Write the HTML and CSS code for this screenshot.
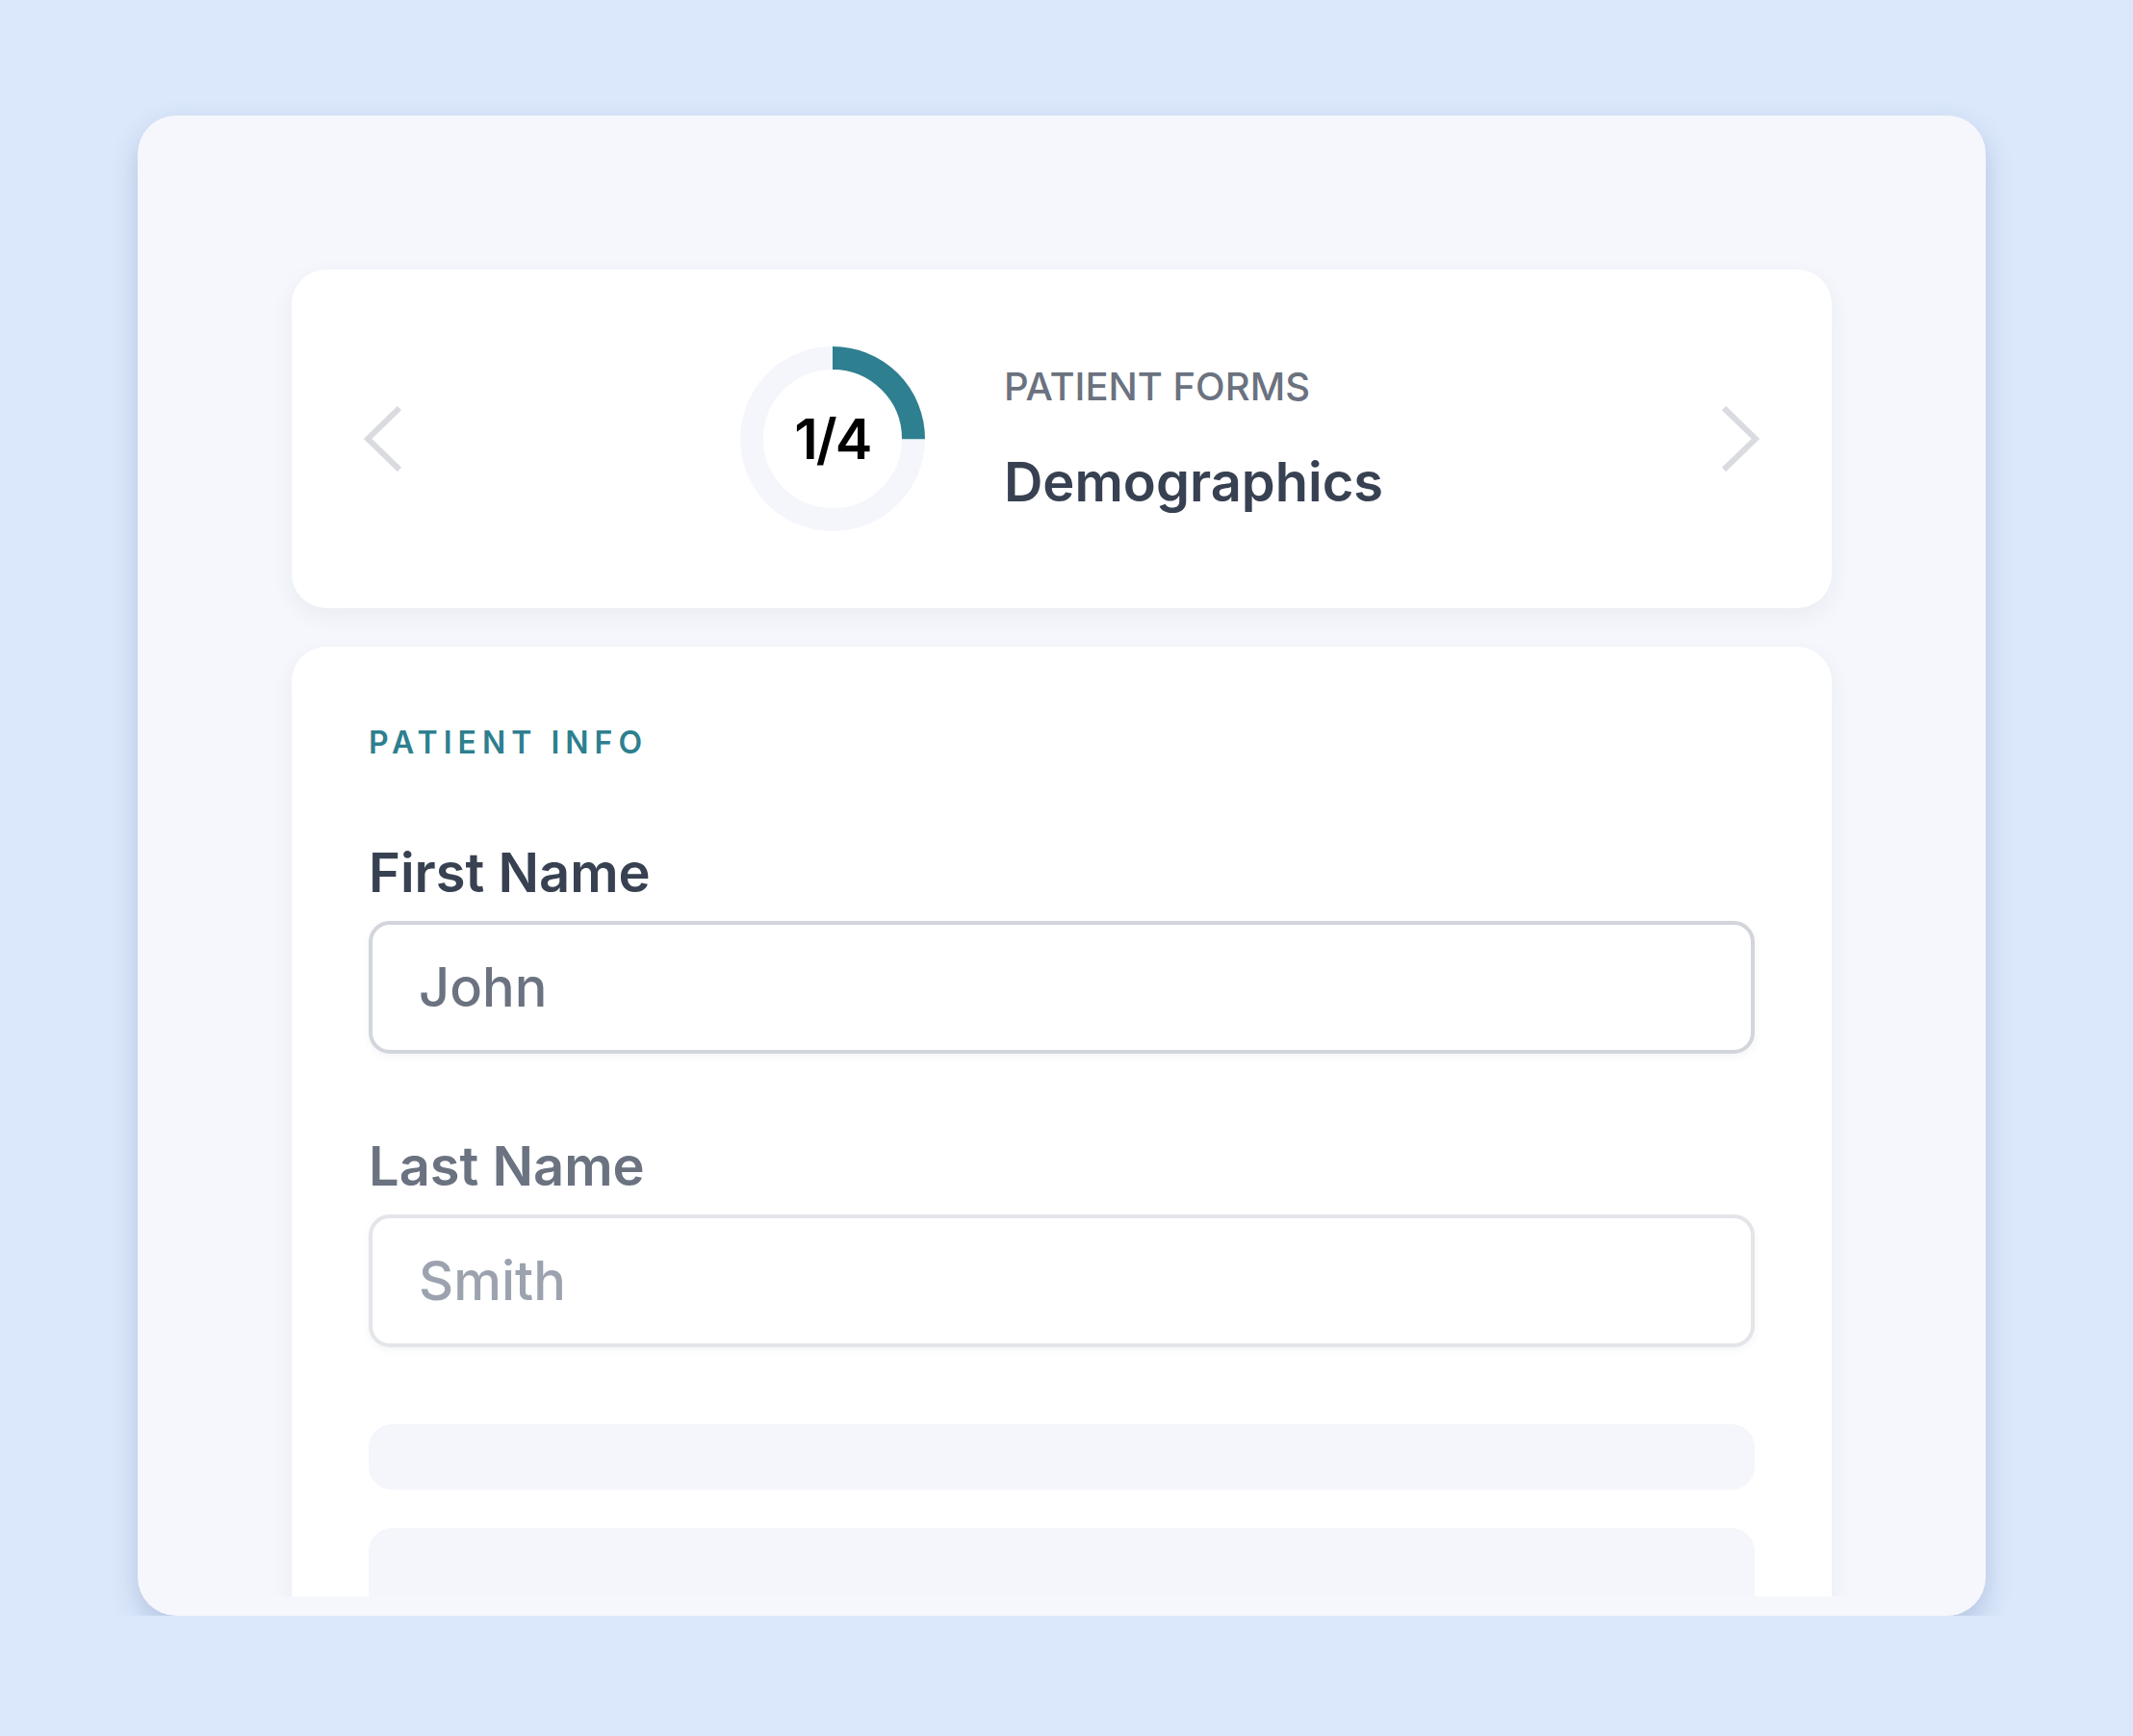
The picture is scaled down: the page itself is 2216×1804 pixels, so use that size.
FILE: index.html
```html
<!DOCTYPE html>
<html lang="en">
<head>
    <meta charset="UTF-8">
    <meta name="viewport" content="width=device-width, initial-scale=1.0">
    <title>Patient Forms - Demographics</title>
    <link rel="stylesheet" href="styles.css">
</head>
<body>
    <div class="page">
        <div class="window">
            <div class="viewport">
                <header class="step-card">
                    <button class="nav-btn" type="button" aria-label="Previous form">
                        <svg width="40" height="68" viewBox="0 0 40 68">
                            <polyline points="37,2 4,34 37,66" />
                        </svg>
                    </button>
                    <div class="step-info">
                        <div class="progress-ring">
                            <svg width="192" height="192" viewBox="0 0 192 192">
                                <circle class="ring-track" cx="96" cy="96" r="84" />
                                <circle class="ring-value" cx="96" cy="96" r="84" />
                            </svg>
                            <span class="progress-label">1/4</span>
                        </div>
                        <div class="step-text">
                            <div class="step-kicker">PATIENT FORMS</div>
                            <h1 class="step-title">Demographics</h1>
                        </div>
                    </div>
                    <button class="nav-btn" type="button" aria-label="Next form">
                        <svg width="40" height="68" viewBox="0 0 40 68">
                            <polyline points="3,2 36,34 3,66" />
                        </svg>
                    </button>
                </header>

                <section class="form-card">
                    <h2 class="section-title">PATIENT INFO</h2>
                    <div class="field">
                        <label for="first-name">First Name</label>
                        <input id="first-name" type="text" value="John">
                    </div>
                    <div class="field muted">
                        <label for="last-name">Last Name</label>
                        <input id="last-name" type="text" placeholder="Smith">
                    </div>
                    <div class="skeleton"></div>
                    <div class="skeleton tall"></div>
                </section>
            </div>
        </div>
    </div>
</body>
</html>
```

FILE: styles.css
```css
body {
    margin: 0;
    background-color: #dbe8fb;
    font-family: Inter, "Noto Sans", sans-serif;
}
.page {
    padding: 120px 0 0 143px;
}
.window {
    width: 1920px;
    box-sizing: border-box;
    padding: 120px 120px 20px;
    background-color: #f5f7fc;
    border-radius: 40px;
    box-shadow: 0 12px 28px rgba(40, 70, 130, 0.22);
}
/* scroll area: clips the form at the bottom, leaves room for card shadows */
.viewport {
    height: 1419px;
    box-sizing: border-box;
    padding: 40px 40px 0;
    overflow: hidden;
    display: flex;
    flex-direction: column;
    gap: 40px;
}

/* step header */
.step-card {
    flex-shrink: 0;
    height: 352px;
    box-sizing: border-box;
    padding: 0 75px;
    display: flex;
    align-items: center;
    justify-content: space-between;
    background-color: #fff;
    border-radius: 36px;
    box-shadow: 0 8px 24px rgba(40, 50, 90, 0.06);
}
.nav-btn {
    padding: 0;
    border: none;
    background: none;
    display: flex;
    cursor: pointer;
}
.nav-btn polyline {
    fill: none;
    stroke: #d9dbe0;
    stroke-width: 6;
}
.step-info {
    display: flex;
    align-items: center;
    gap: 82px;
}
.progress-ring {
    display: grid;
    place-items: center;
}
.progress-ring svg,
.progress-label {
    grid-area: 1 / 1;
}
.progress-ring svg {
    transform: rotate(-90deg);
}
.ring-track,
.ring-value {
    fill: none;
    stroke-width: 24;
}
.ring-track {
    stroke: #f4f6fb;
}
.ring-value {
    stroke: #2e7f8f;
    stroke-dasharray: 131.95 527.79;
}
.progress-label {
    font-size: 58px;
    font-weight: 600;
    color: #000;
    letter-spacing: -2px;
}
.step-kicker {
    font-size: 40px;
    line-height: 48px;
    font-weight: 500;
    color: #6b7280;
}
.step-title {
    margin: 41px 0 0;
    font-size: 56px;
    line-height: 68px;
    font-weight: 600;
    color: #374151;
}

/* form */
.form-card {
    flex-shrink: 0;
    padding: 80px;
    background-color: #fff;
    border-radius: 36px 36px 0 0;
    box-shadow: 0 8px 24px rgba(40, 50, 90, 0.06);
}
.section-title {
    margin: 0 0 81px;
    font-size: 32px;
    line-height: 40px;
    font-weight: 600;
    letter-spacing: 6px;
    color: #2e7f8f;
}
.field {
    margin-bottom: 83px;
}
.field label {
    display: block;
    margin-bottom: 16px;
    font-size: 56px;
    line-height: 68px;
    font-weight: 600;
    color: #374151;
}
.field input {
    display: block;
    width: 100%;
    height: 138px;
    box-sizing: border-box;
    padding: 0 48px;
    border: 4px solid #d3d5dc;
    border-radius: 22px;
    background-color: #fff;
    font-family: Inter, "Noto Sans", sans-serif;
    font-size: 56px;
    font-weight: 500;
    color: #6b7280;
    box-shadow: 0 3px 8px rgba(40, 50, 90, 0.05);
    outline: none;
}
.field.muted label {
    color: #6b7280;
}
.field.muted input {
    border-color: #e3e5e9;
}
.field input::placeholder {
    color: #9ca3af;
}
.skeleton {
    height: 68px;
    margin-top: -3px;
    margin-bottom: 40px;
    background-color: #f5f6fb;
    border-radius: 24px;
}
.skeleton.tall {
    height: 200px;
    margin-top: 0;
}
```
